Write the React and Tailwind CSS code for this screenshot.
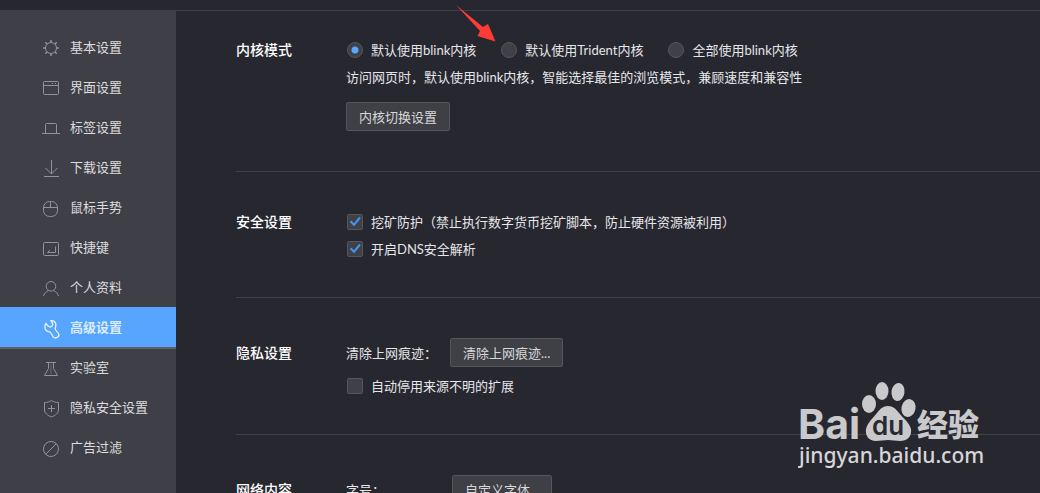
import React, { useState } from 'react';

const menu = [
  {
    name: '基本设置',
    icon: (
      <>
        <circle cx="9" cy="11" r="5.5" />
        <path d="M9 3v2.5M9 16.5V19M1 11h2.5M14.5 11H17M3.3 5.3l1.9 1.9M12.8 14.8l1.9 1.9M3.3 16.7l1.9-1.9M12.8 7.2l1.9-1.9" strokeWidth="1.5" />
      </>
    ),
  },
  {
    name: '界面设置',
    icon: (
      <>
        <rect x="1.5" y="4.5" width="15" height="13" rx="1" />
        <path d="M1.5 8.5h15M10 6.5h1M13 6.5h1" />
      </>
    ),
  },
  { name: '标签设置', icon: <path d="M0 16.5h18M3.5 16.5v-9a1 1 0 0 1 1-1h9a1 1 0 0 1 1 1v9" /> },
  { name: '下载设置', icon: <path d="M9.5 3v14M3.5 11l6 6 6-6M2 19.5h15" /> },
  {
    name: '鼠标手势',
    icon: (
      <>
        <rect x="1.5" y="4.5" width="14" height="15" rx="6" />
        <path d="M1.5 10.5h14M8.5 4.5v6" />
      </>
    ),
  },
  {
    name: '快捷键',
    icon: (
      <>
        <rect x="1.5" y="5.5" width="15" height="13" rx="1" />
        <path d="M13.5 9.5v6h-8l2.5-2.5" />
      </>
    ),
  },
  {
    name: '个人资料',
    icon: (
      <>
        <circle cx="9" cy="9.3" r="4.8" />
        <path d="M1.5 19c.8-2.8 2.7-4.6 5-5.3M16.5 19c-.8-2.8-2.7-4.6-5-5.3" />
      </>
    ),
  },
  {
    name: '高级设置',
    icon: (
      <path
        d="M4 6.5C2.3 8.5 2.6 12 4.2 13.5c1.3 1.2 2.9 1 4 1.7 1.5 1 1.7 3.3 3 4.7 1.3 1.3 3.3 1.2 4.5.2 1.3-1.1 1.5-2.4.8-3.6-.8-1.5-3-2.9-3.3-4.5-.2-1.4 1-2.6.6-4.8-.5-2.3-2.6-3.7-4.8-3.5 1.2 1.3 2 2.6 1.6 4.2-.4 1.4-1.7 2.3-3.1 2-1.7-.3-2.6-1.9-3.5-3.4z"
        strokeWidth="1.3"
      />
    ),
  },
  {
    name: '实验室',
    icon: (
      <>
        <path d="M4 5.5h10M6.5 5.5v6l-4 7h13l-4-7v-6" />
        <path d="M9 7.5v9" strokeDasharray="1 1" />
      </>
    ),
  },
  {
    name: '隐私安全设置',
    icon: <path d="M9.5 3.5c-2 1.5-4.5 2-7 2V13c0 3 3 5.5 7 7 4-1.5 7-4 7-7V5.5c-2.5 0-5-.5-7-2zM9.5 8v7M6 11.5h7" />,
  },
  {
    name: '广告过滤',
    icon: (
      <>
        <circle cx="9" cy="12" r="7.5" />
        <path d="M3.8 17.2L14.2 6.8" />
      </>
    ),
  },
];

const cores = ['默认使用blink内核', '默认使用Trident内核', '全部使用blink内核'];

const Arrow = () => (
  <svg className="absolute -top-[37px] -left-[45px] w-10 h-[37px] pointer-events-none" viewBox="0 0 40 37" aria-hidden="true">
    <path d="M0 0L27 22 32 19 39.5 36.5 21.5 31 24 26z" fill="#ff3b38" />
  </svg>
);

const Radio = ({ label, checked, onChange, children }) => (
  <label className="relative flex items-center gap-2">
    <input
      type="radio"
      name="core"
      checked={checked}
      onChange={onChange}
      className="appearance-none size-4 rounded-full border border-[#55555c] bg-[#404047] checked:bg-[radial-gradient(circle,#5aa7ff_3px,#404047_4px)]"
    />
    <span>{label}</span>
    {children}
  </label>
);

const Checkbox = ({ label, defaultChecked }) => (
  <label className="relative flex items-center gap-2 pl-px">
    <input
      type="checkbox"
      defaultChecked={defaultChecked}
      className="peer appearance-none size-4 rounded-xs border border-[#55555c] bg-[#404047]"
    />
    <svg className="absolute left-px top-0 size-4 hidden peer-checked:block pointer-events-none" viewBox="0 0 16 16" fill="none" stroke="#3f97f6" strokeWidth="2" aria-hidden="true">
      <path d="M3.5 7.3L7 10.800l6-7.300" />
    </svg>
    <span>{label}</span>
  </label>
);

const Button = ({ children }) => (
  <button type="button" className="h-[29px] px-3 border border-[#55555b] rounded-xs bg-[#3f3f46] text-[#d8d8da] whitespace-nowrap">
    {children}
  </button>
);

const Section = ({ title, className, titleClass = 'leading-4', children }) => (
  <section className={`flex border-b border-[#404047] pb-10 ${className}`}>
    <h2 className={`w-[110px] shrink-0 text-sm font-medium text-white ${titleClass}`}>{title}</h2>
    <div className="flex flex-col items-start gap-[11px] leading-4 whitespace-nowrap">{children}</div>
  </section>
);

const Watermark = () => (
  <svg className="absolute right-14 bottom-[22px] w-[186px] h-[90px] pointer-events-none" viewBox="0 0 186 90" fill="#c9c9cb">
    <text x="0" y="58" fontSize="41" className="font-['Inter'] font-bold">Bai</text>
    <ellipse cx="71" cy="23" rx="7" ry="9" />
    <ellipse cx="84" cy="10" rx="6.5" ry="9" />
    <ellipse cx="100" cy="11" rx="6.5" ry="9" transform="rotate(8 100 11)" />
    <ellipse cx="110.5" cy="27" rx="7" ry="9" transform="rotate(12 110.5 27)" />
    <path d="M90 25c5 0 8 3 11 7 4 5 10 9 12 16 1 8-4 12-11 12-4 0-8-1-12-1s-8 1-12 1c-7 0-11-5-10-12 2-7 7-11 11-16 3-4 6-7 11-7z" />
    <text x="74" y="54" fontSize="26" fill="#292931" className="font-['Inter'] font-semibold">du</text>
    <text x="119" y="55" fontSize="31" className="font-['Noto_Sans_CJK_SC'] font-black">经验</text>
    <text x="1" y="82" fontSize="21" fill="#d6d6d8" className="font-['Noto_Sans'] font-medium">jingyan.baidu.com</text>
  </svg>
);

const App = () => {
  const [active, setActive] = useState('高级设置');
  const [core, setCore] = useState(cores[0]);

  return (
    <div className="relative flex flex-col h-screen overflow-hidden bg-[#272730] text-[13px] text-[#e6e6e8] font-['Lato','Noto_Sans_CJK_SC',sans-serif]">
      <header className="h-[11px] shrink-0 border-b border-[#3f3f47]" />

      <div className="flex flex-1 min-h-0">
        <nav className="w-44 shrink-0 pt-4 bg-[#3f3f47]">
          {menu.map((item) => (
            <a
              key={item.name}
              href="#"
              onClick={() => setActive(item.name)}
              className={`flex items-center gap-2.5 h-10 pl-[42px] ${
                active === item.name
                  ? 'bg-[#57a5ff] font-bold text-[#dcecff] shadow-[0_2px_0_#5f6068]'
                  : 'text-[#dcdcde]'
              }`}
            >
              <svg
                className={`w-[18px] h-5 shrink-0 overflow-visible ${active === item.name ? 'text-[#e8f3ff]' : 'text-[#929297]'}`}
                viewBox="0 0 18 20"
                fill="none"
                stroke="currentColor"
                aria-hidden="true"
              >
                {item.icon}
              </svg>
              <span className="pt-0.5">{item.name}</span>
            </a>
          ))}
        </nav>

        <main className="flex-1 min-w-0 pl-[60px]">
          <Section title="内核模式" className="pt-[31px]">
            <div className="flex gap-[25px] pl-px">
              {cores.map((c, i) => (
                <Radio key={c} label={c} checked={core === c} onChange={() => setCore(c)}>
                  {i === 1 && <Arrow />}
                </Radio>
              ))}
            </div>
            <p className="pb-1.5">访问网页时，默认使用blink内核，智能选择最佳的浏览模式，兼顾速度和兼容性</p>
            <Button>内核切换设置</Button>
          </Section>

          <Section title="安全设置" className="pt-[42px]">
            <Checkbox label="挖矿防护（禁止执行数字货币挖矿脚本，防止硬件资源被利用）" defaultChecked />
            <Checkbox label="开启DNS安全解析" defaultChecked />
          </Section>

          <Section title="隐私设置" className="pt-10" titleClass="leading-[29px]">
            <div className="flex items-center gap-[13px]">
              <span>清除上网痕迹：</span>
              <Button>清除上网痕迹...</Button>
            </div>
            <Checkbox label="自动停用来源不明的扩展" />
          </Section>

          <Section title="网络内容" className="pt-10" titleClass="leading-[29px]">
            <div className="flex items-center">
              <span className="w-[106px]">字号：</span>
              <Button>自定义字体...</Button>
            </div>
          </Section>
        </main>
      </div>

      <Watermark />
    </div>
  );
};

export default App;
